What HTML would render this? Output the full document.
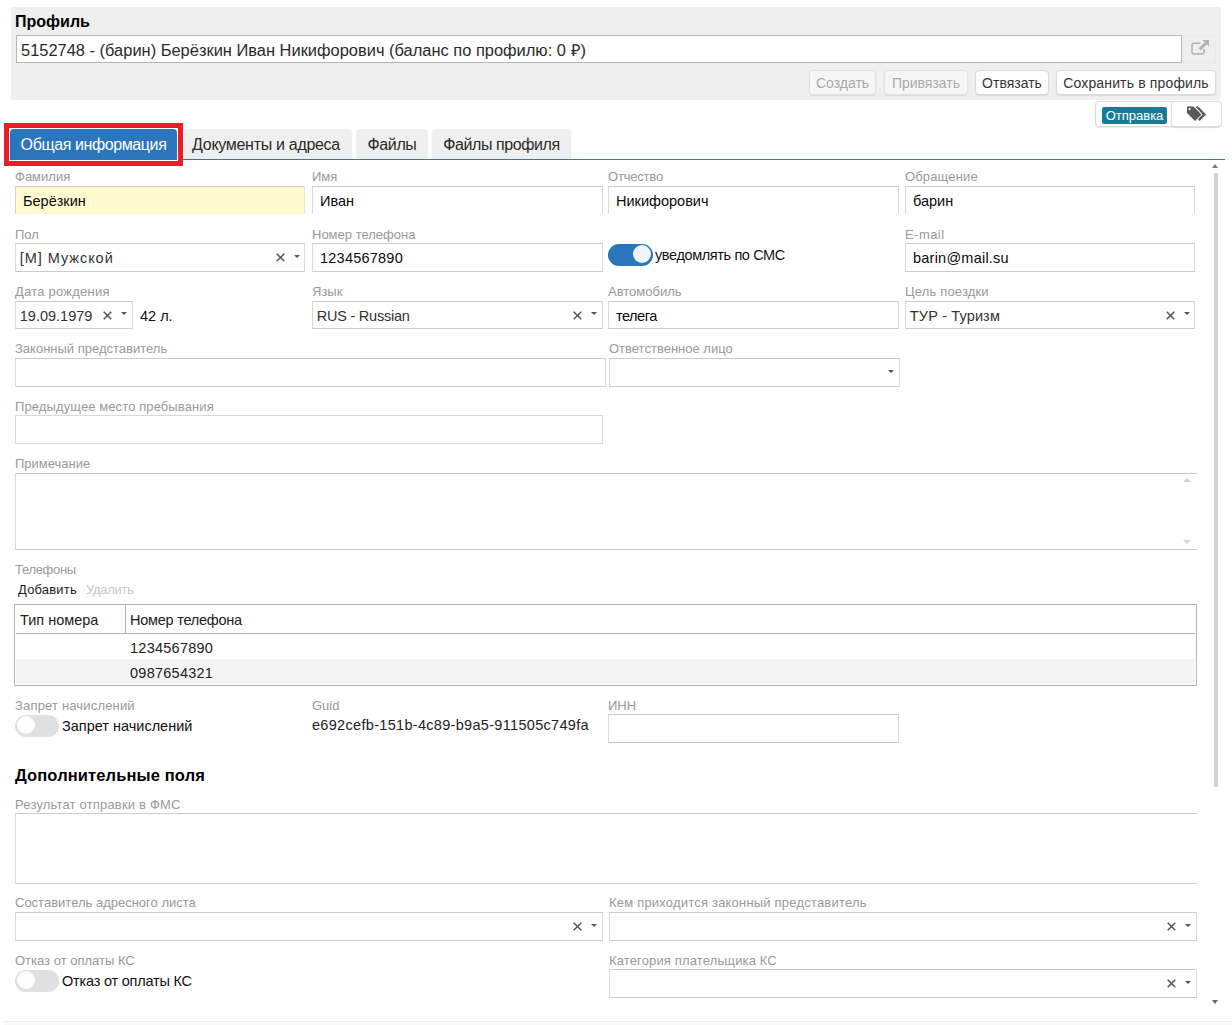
<!DOCTYPE html>
<html lang="ru">
<head>
<meta charset="utf-8">
<title>Профиль</title>
<style>
html,body{margin:0;padding:0;background:#fff;}
body{width:1232px;height:1025px;position:relative;overflow:hidden;font-family:"Liberation Sans",sans-serif;color:#1a1a1a;}
.a{position:absolute;white-space:nowrap;box-sizing:border-box;}
.lbl{position:absolute;white-space:nowrap;font-size:13px;line-height:16px;color:#999;}
.inp{position:absolute;box-sizing:border-box;border:1px solid #dadada;border-top-color:#cbcbcb;border-bottom-color:#cbcbcb;background:#fff;height:29px;font-size:14.5px;line-height:29px;padding-left:7px;white-space:nowrap;overflow:hidden;color:#0a0a0a;}
.inp.h28{height:28px;line-height:29px;}
.inp.r1{height:28px;border-bottom:none;}
.sel{padding-left:3.800px;color:#333;}
.x{position:absolute;top:9px;width:9px;height:9px;}
.c{position:absolute;top:11px;width:0;height:0;border-left:3.750px solid transparent;border-right:3.750px solid transparent;border-top:3.500px solid #555;}
.h28 .c{top:10px;}
.btn{position:absolute;box-sizing:border-box;top:70px;height:25px;border:1px solid #dadada;border-radius:4px;background:#fff;font-size:14px;line-height:25px;text-align:center;white-space:nowrap;color:#333;box-shadow:0 1px 1px rgba(0,0,0,.09);}
.btn.dis{background:#f6f6f6;border-color:#e2e2e2;color:#aaa;}
.tab{position:absolute;box-sizing:border-box;top:129px;height:30px;background:#efefef;border-radius:4px 4px 0 0;font-size:16px;line-height:32px;text-align:center;white-space:nowrap;color:#2a2a2a;letter-spacing:-0.400px;}
.tog{position:absolute;width:44px;height:22px;border-radius:11px;background:#e0e0e0;}
.tog i{position:absolute;top:1px;left:1.500px;width:18px;height:18px;border-radius:50%;background:#fdfdfd;}
.tog.on{background:#2b76ba;width:45px;height:22.500px;}
.tog.on i{left:25px;top:1.200px;background:#eff4f9;}
.t15{position:absolute;white-space:nowrap;font-size:14.5px;line-height:18px;color:#111;}
</style>
</head>
<body>
<!-- header panel -->
<div class="a" style="left:11px;top:7px;width:1210px;height:93px;background:#efefef;border-radius:2px;"></div>
<div class="a" style="left:15px;top:13px;font-size:16px;font-weight:700;line-height:18px;color:#000;">Профиль</div>
<div class="a" style="left:16px;top:35px;width:1166px;height:28px;border:1px solid #b5b5b5;background:#fff;font-size:16.450px;line-height:28px;padding-left:4px;color:#2a2a2a;">5152748 - (барин) Берёзкин Иван Никифорович (баланс по профилю: 0 ₽)</div>
<div class="a" style="left:1183px;top:35px;width:33px;height:28px;border:1px solid #e9e9e9;background:#efefef;">
<svg width="32" height="28" viewBox="0 0 32 28" style="position:absolute;left:0px;top:-1px"><path d="M16.500 8.300H10a2 2 0 0 0-2 2V17a2 2 0 0 0 2 2h8a2 2 0 0 0 2-2v-3" fill="none" stroke="#b2b2b2" stroke-width="1.600"/><path d="M18.500 5H25v6.500l-2.200-2.200-6 6-2.100-2.100 6-6z" fill="#b2b2b2"/></svg>
</div>
<div class="btn dis" style="left:809px;width:67px;">Создать</div>
<div class="btn dis" style="left:884px;width:84px;">Привязать</div>
<div class="btn" style="left:975px;width:74px;">Отвязать</div>
<div class="btn" style="left:1056px;width:160px;letter-spacing:0.150px;">Сохранить в профиль</div>

<!-- send group -->
<div class="a" style="left:1095px;top:101px;width:126px;height:26px;border:1px solid #dcdcdc;border-radius:4px;background:#fff;box-shadow:0 1px 1px rgba(0,0,0,.08);"></div>
<div class="a" style="left:1102px;top:107px;width:65px;height:17px;background:#1b7a97;border-radius:2px;color:#fff;font-size:13px;line-height:17px;text-align:center;">Отправка</div>
<div class="a" style="left:1171px;top:101px;width:51px;height:26px;border:1px solid #dcdcdc;border-radius:4px;background:#fff;box-shadow:0 1px 1px rgba(0,0,0,.08);">
<svg width="50" height="25" viewBox="0 0 50 25" style="position:absolute;left:-1px;top:-1px"><path d="M16 5.500h6.500l8 8-6.500 6.500-8-8z" fill="#585858"/><path d="M24.300 5.500h2.800l8 8-6.500 6.500-1.700-1.700 4.800-4.800z" fill="#585858"/><circle cx="18.600" cy="8.100" r="1.100" fill="#fff"/></svg>
</div>

<!-- tabs -->
<div class="a" style="left:10px;top:159px;width:1215px;height:1px;background:#2f75ba;"></div>
<div class="tab" style="left:10px;width:167px;background:#2b76bb;color:#fff;">Общая информация</div>
<div class="tab" style="left:184px;width:168px;letter-spacing:-0.300px;padding-right:4px;">Документы и адреса</div>
<div class="tab" style="left:356px;width:72px;">Файлы</div>
<div class="tab" style="left:432px;width:139px;">Файлы профиля</div>
<div class="a" style="left:4px;top:123px;width:179px;height:43px;border:5px solid #ed1c24;"></div>
<div class="a" style="left:9px;top:128px;width:169px;height:33px;border:1px solid #fff;border-bottom:none;"></div>
<div class="a" style="left:9px;top:160px;width:169px;height:1px;background:#fff;"></div>

<!-- scrollbar -->
<div class="a" style="left:1214px;top:173px;width:4px;height:614px;background:#d4d2d2;"></div>
<div class="a" style="left:1212px;top:164px;width:0;height:0;border-left:3.500px solid transparent;border-right:3.500px solid transparent;border-bottom:4px solid #777;"></div>
<div class="a" style="left:1212px;top:1000px;width:0;height:0;border-left:3.500px solid transparent;border-right:3.500px solid transparent;border-top:4px solid #666;"></div>
<div class="a" style="left:4px;top:1021px;width:1228px;height:4px;background:#f9f9f9;border-top:1px solid #ececec;"></div>

<div class="lbl" style="left:15px;top:169px">Фамилия</div>
<div class="inp r1" style="left:15px;top:186px;width:290px;background:#fffbd0;border-right-color:#ece9c6;border-left-color:#d6d4c0;">Берёзкин</div>
<div class="lbl" style="left:312px;top:169px">Имя</div>
<div class="inp r1" style="left:312px;top:186px;width:291px;">Иван</div>
<div class="lbl" style="left:608px;top:169px;letter-spacing:-0.2px">Отчество</div>
<div class="inp r1" style="left:608px;top:186px;width:291px;">Никифорович</div>
<div class="lbl" style="left:905px;top:169px;letter-spacing:0.15px">Обращение</div>
<div class="inp r1" style="left:905px;top:186px;width:290px;">барин</div>
<div class="lbl" style="left:15px;top:227px">Пол</div>
<div class="inp sel" style="left:15px;top:243px;width:290px;"><span style="letter-spacing:0.95px">[М] Мужской</span><svg class="x" style="left:260px" viewBox="0 0 9 9"><path d="M0.700 0.700L8.300 8.300M8.300 0.700L0.700 8.300" stroke="#555" stroke-width="1.500" fill="none"/></svg><i class="c" style="left:278px"></i></div>
<div class="lbl" style="left:312px;top:227px">Номер телефона</div>
<div class="inp " style="left:312px;top:243px;width:291px;"><span style="letter-spacing:0.23px">1234567890</span></div>
<div class="tog on" style="left:608px;top:243.5px"><i></i></div>
<div class="t15" style="left:655px;top:246px;letter-spacing:-0.38px">уведомлять по СМС</div>
<div class="lbl" style="left:905px;top:227px;letter-spacing:0.45px">E-mail</div>
<div class="inp " style="left:905px;top:243px;width:290px;"><span style="letter-spacing:0.23px">barin@mail.su</span></div>
<div class="lbl" style="left:15px;top:284px;letter-spacing:0.23px">Дата рождения</div>
<div class="inp sel h28" style="left:15px;top:301px;width:118px;">19.09.1979<svg class="x" style="left:87px" viewBox="0 0 9 9"><path d="M0.700 0.700L8.300 8.300M8.300 0.700L0.700 8.300" stroke="#555" stroke-width="1.500" fill="none"/></svg><i class="c" style="left:105px"></i></div>
<div class="t15" style="left:140px;top:307px">42 л.</div>
<div class="lbl" style="left:312px;top:284px">Язык</div>
<div class="inp sel h28" style="left:312px;top:301px;width:291px;"><span style="letter-spacing:-0.24px">RUS - Russian</span><svg class="x" style="left:260px" viewBox="0 0 9 9"><path d="M0.700 0.700L8.300 8.300M8.300 0.700L0.700 8.300" stroke="#555" stroke-width="1.500" fill="none"/></svg><i class="c" style="left:278px"></i></div>
<div class="lbl" style="left:608px;top:284px">Автомобиль</div>
<div class="inp h28" style="left:608px;top:301px;width:291px;"><span style="letter-spacing:-0.47px">телега</span></div>
<div class="lbl" style="left:905px;top:284px;letter-spacing:0.16px">Цель поездки</div>
<div class="inp sel h28" style="left:905px;top:301px;width:290px;"><span style="letter-spacing:0.14px">ТУР - Туризм</span><svg class="x" style="left:260px" viewBox="0 0 9 9"><path d="M0.700 0.700L8.300 8.300M8.300 0.700L0.700 8.300" stroke="#555" stroke-width="1.500" fill="none"/></svg><i class="c" style="left:278px"></i></div>
<div class="lbl" style="left:15px;top:341px">Законный представитель</div>
<div class="inp " style="left:15px;top:358px;width:591px;"></div>
<div class="lbl" style="left:609px;top:341px">Ответственное лицо</div>
<div class="inp sel" style="left:609px;top:358px;width:291px;"><i class="c" style="left:278px"></i></div>
<div class="lbl" style="left:15px;top:399px;letter-spacing:0.1px">Предыдущее место пребывания</div>
<div class="inp " style="left:15px;top:415px;width:588px;border-color:#d9d9d9;"></div>
<div class="lbl" style="left:15px;top:456px">Примечание</div>
<div class="inp" style="left:15px;top:473px;width:1182px;height:77px;border-right:none;"></div>
<div class="a" style="left:1182.500px;top:478px;width:0;height:0;border-left:4px solid transparent;border-right:4px solid transparent;border-bottom:4px solid #d4d4d4;"></div>
<div class="a" style="left:1182.500px;top:540px;width:0;height:0;border-left:4px solid transparent;border-right:4px solid transparent;border-top:4px solid #d4d4d4;"></div>
<div class="lbl" style="left:15px;top:562px;letter-spacing:-0.3px">Телефоны</div>
<div class="a" style="left:18px;top:582px;font-size:13px;line-height:16px;color:#1c1c1c;letter-spacing:0.180px">Добавить</div>
<div class="a" style="left:86px;top:582px;font-size:13px;line-height:16px;color:#c6c6c6;letter-spacing:-0.270px">Удалить</div>
<div class="a" style="left:14px;top:604px;width:1183px;height:82px;border:1px solid #b4b4b4;background:#fff;"></div>
<div class="a" style="left:16px;top:659px;width:1179px;height:25px;background:#f3f3f3;"></div>
<div class="a" style="left:16px;top:633px;width:1179px;height:1px;background:#b4b4b4;"></div>
<div class="a" style="left:125px;top:605px;width:1px;height:28px;background:#b4b4b4;"></div>
<div class="t15" style="left:20px;top:611px;color:#222">Тип номера</div>
<div class="t15" style="left:130px;top:611px;color:#222;letter-spacing:-0.250px">Номер телефона</div>
<div class="t15" style="left:130px;top:639px;color:#222;letter-spacing:0.250px">1234567890</div>
<div class="t15" style="left:130px;top:664px;color:#222;letter-spacing:0.250px">0987654321</div>
<div class="lbl" style="left:15px;top:698px;letter-spacing:0.17px">Запрет начислений</div>
<div class="tog" style="left:15px;top:715px"><i></i></div>
<div class="t15" style="left:62px;top:717px">Запрет начислений</div>
<div class="lbl" style="left:312px;top:698px">Guid</div>
<div class="t15" style="left:312px;top:716px;color:#222;letter-spacing:0.310px">e692cefb-151b-4c89-b9a5-911505c749fa</div>
<div class="lbl" style="left:608px;top:698px">ИНН</div>
<div class="inp " style="left:608px;top:714px;width:291px;"></div>
<div class="a" style="left:15px;top:765px;font-size:16.500px;font-weight:700;line-height:20px;color:#000;letter-spacing:0.120px;">Дополнительные поля</div>
<div class="lbl" style="left:15px;top:797px;letter-spacing:0.18px">Результат отправки в ФМС</div>
<div class="inp" style="left:15px;top:813px;width:1182px;height:71px;border-right:none;"></div>
<div class="lbl" style="left:15px;top:895px">Составитель адресного листа</div>
<div class="inp sel" style="left:15px;top:912px;width:588px;"><svg class="x" style="left:557px" viewBox="0 0 9 9"><path d="M0.700 0.700L8.300 8.300M8.300 0.700L0.700 8.300" stroke="#555" stroke-width="1.500" fill="none"/></svg><i class="c" style="left:575px"></i></div>
<div class="lbl" style="left:609px;top:895px;letter-spacing:0.2px">Кем приходится законный представитель</div>
<div class="inp sel" style="left:609px;top:912px;width:588px;"><svg class="x" style="left:557px" viewBox="0 0 9 9"><path d="M0.700 0.700L8.300 8.300M8.300 0.700L0.700 8.300" stroke="#555" stroke-width="1.500" fill="none"/></svg><i class="c" style="left:575px"></i></div>
<div class="lbl" style="left:15px;top:953px">Отказ от оплаты КС</div>
<div class="tog" style="left:15px;top:970px"><i></i></div>
<div class="t15" style="left:62px;top:972px;letter-spacing:-0.210px">Отказ от оплаты КС</div>
<div class="lbl" style="left:609px;top:953px;letter-spacing:0.14px">Категория плательщика КС</div>
<div class="inp sel" style="left:609px;top:969px;width:588px;"><svg class="x" style="left:557px" viewBox="0 0 9 9"><path d="M0.700 0.700L8.300 8.300M8.300 0.700L0.700 8.300" stroke="#555" stroke-width="1.500" fill="none"/></svg><i class="c" style="left:575px"></i></div>
</body>
</html>
